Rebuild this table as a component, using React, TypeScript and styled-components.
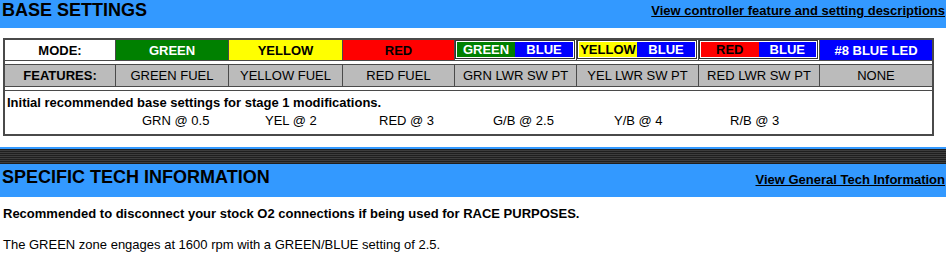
import React from "react";
import styled, { createGlobalStyle } from "styled-components";

const GlobalStyle = createGlobalStyle`
  *, *::before, *::after { box-sizing: border-box; }
  html, body { margin: 0; padding: 0; background: #fff; }
  body { font-family: "Liberation Sans", Arial, Helvetica, sans-serif; color: #000; }
`;

const LINE = "#4a4a4a";
const COLS = [110, 113, 114, 112, 122, 122, 121, 113];

const Page = styled.div`
  width: 946px;
`;

const Bar = styled.div<{ $h: number; $pt: number }>`
  display: flex;
  justify-content: space-between;
  align-items: flex-start;
  height: ${(p) => p.$h}px;
  padding: ${(p) => p.$pt}px 1px 0 2px;
  background: #3399ff;
`;

const BarTitle = styled.h2`
  margin: 0;
  font-size: 18px;
  line-height: 20px;
  font-weight: 700;
`;

const BarLink = styled.a<{ $offset: number }>`
  margin-top: ${(p) => p.$offset}px;
  font-size: 13px;
  line-height: 15px;
  font-weight: 700;
  color: #000;
  text-decoration: underline;
`;

const TableWrap = styled.div`
  padding: 10px 12px 11px 3px;
`;

const Frame = styled.div`
  width: 931px;
  border: 2px solid ${LINE};
`;

const GridRow = styled.div<{ $h: number }>`
  display: grid;
  grid-template-columns: ${COLS.map((c) => `${c}px`).join(" ")};
  height: ${(p) => p.$h}px;
  border-bottom: 1px solid ${LINE};
`;

const Spacer = styled.div`
  height: 4px;
  border-bottom: 1px solid ${LINE};
`;

const Cell = styled.div<{ $bg: string; $fg: string; $bold?: boolean; $first?: boolean }>`
  display: flex;
  align-items: center;
  justify-content: center;
  background: ${(p) => p.$bg};
  color: ${(p) => p.$fg};
  font-size: 13px;
  font-weight: ${(p) => (p.$bold ? 700 : 400)};
  border-left: ${(p) => (p.$first ? "none" : `1px solid ${LINE}`)};
  white-space: nowrap;
`;

const ComboCell = styled.div`
  display: flex;
  background: #fff;
  padding: 0 1px 1px 0;
  border-left: 1px solid ${LINE};
`;

const ComboInner = styled.div`
  flex: 1;
  display: grid;
  grid-template-columns: 1fr 1fr;
  border: 1px solid #333;
  padding: 1px;
  background: #fff;
`;

const Half = styled.div<{ $bg: string; $fg: string }>`
  display: flex;
  align-items: center;
  justify-content: center;
  background: ${(p) => p.$bg};
  color: ${(p) => p.$fg};
  font-size: 13px;
  font-weight: 700;
  white-space: nowrap;
`;

const InfoBox = styled.div`
  height: 43px;
  padding: 4px 2px 0;
  background: #fff;
`;

const InfoTitle = styled.div`
  font-size: 13px;
  line-height: 16px;
  font-weight: 700;
`;

const ValueRow = styled.div`
  display: flex;
  margin-top: 2px;
  padding-left: 135px;
  font-size: 13px;
  line-height: 16px;
`;

const Value = styled.span<{ $w: number }>`
  flex: none;
  width: ${(p) => p.$w}px;
  white-space: nowrap;
`;

const Divider = styled.div`
  height: 17px;
  border-top: 2px solid #3399ff;
  background: repeating-linear-gradient(to bottom, #1f1f1f 0 1px, #3d3d3d 1px 2px);
`;

const Para = styled.p<{ $bold?: boolean; $mt: number }>`
  margin: ${(p) => p.$mt}px 0 0 3px;
  font-size: 13px;
  line-height: 15px;
  font-weight: ${(p) => (p.$bold ? 700 : 400)};
`;

const GREEN = "#008000";
const YELLOW = "#ffff00";
const RED = "#ff0000";
const BLUE = "#0000ff";
const GREY = "#bbbbbb";

type Solid = { kind: "solid"; label: string; bg: string; fg: string };
type Combo = { kind: "combo"; left: string; lbg: string; lfg: string };

const modes: (Solid | Combo)[] = [
  { kind: "solid", label: "GREEN", bg: GREEN, fg: "#fff" },
  { kind: "solid", label: "YELLOW", bg: YELLOW, fg: "#000" },
  { kind: "solid", label: "RED", bg: RED, fg: "#000" },
  { kind: "combo", left: "GREEN", lbg: GREEN, lfg: "#fff" },
  { kind: "combo", left: "YELLOW", lbg: YELLOW, lfg: "#000" },
  { kind: "combo", left: "RED", lbg: RED, lfg: "#000" },
  { kind: "solid", label: "#8 BLUE LED", bg: BLUE, fg: "#fff" },
];

const features = [
  "GREEN FUEL",
  "YELLOW FUEL",
  "RED FUEL",
  "GRN LWR SW PT",
  "YEL LWR SW PT",
  "RED LWR SW PT",
  "NONE",
];

const values: [string, number][] = [
  ["GRN @ 0.5", 123],
  ["YEL @ 2", 114],
  ["RED @ 3", 114],
  ["G/B @ 2.5", 121],
  ["Y/B @ 4", 116],
  ["R/B @ 3", 80],
];

export default function App() {
  return (
    <Page>
      <GlobalStyle />
      <Bar $h={28} $pt={0}>
        <BarTitle>BASE SETTINGS</BarTitle>
        <BarLink $offset={3} href="#">
          View controller feature and setting descriptions
        </BarLink>
      </Bar>

      <TableWrap>
        <Frame>
          <GridRow $h={21}>
            <Cell $bg="#fff" $fg="#000" $bold $first>
              MODE:
            </Cell>
            {modes.map((m, i) =>
              m.kind === "solid" ? (
                <Cell key={i} $bg={m.bg} $fg={m.fg} $bold>
                  {m.label}
                </Cell>
              ) : (
                <ComboCell key={i}>
                  <ComboInner>
                    <Half $bg={m.lbg} $fg={m.lfg}>
                      {m.left}
                    </Half>
                    <Half $bg={BLUE} $fg="#fff">
                      BLUE
                    </Half>
                  </ComboInner>
                </ComboCell>
              )
            )}
          </GridRow>
          <Spacer />
          <GridRow $h={22}>
            <Cell $bg={GREY} $fg="#000" $bold $first>
              FEATURES:
            </Cell>
            {features.map((f) => (
              <Cell key={f} $bg={GREY} $fg="#000">
                {f}
              </Cell>
            ))}
          </GridRow>
          <Spacer />
          <InfoBox>
            <InfoTitle>Initial recommended base settings for stage 1 modifications.</InfoTitle>
            <ValueRow>
              {values.map(([v, w]) => (
                <Value key={v} $w={w}>
                  {v}
                </Value>
              ))}
            </ValueRow>
          </InfoBox>
        </Frame>
      </TableWrap>

      <Divider />
      <Bar $h={33} $pt={3}>
        <BarTitle>SPECIFIC TECH INFORMATION</BarTitle>
        <BarLink $offset={5} href="#">
          View General Tech Information
        </BarLink>
      </Bar>

      <Para $bold $mt={9}>
        Recommended to disconnect your stock O2 connections if being used for RACE PURPOSES.
      </Para>
      <Para $mt={16}>The GREEN zone engages at 1600 rpm with a GREEN/BLUE setting of 2.5.</Para>
    </Page>
  );
}
